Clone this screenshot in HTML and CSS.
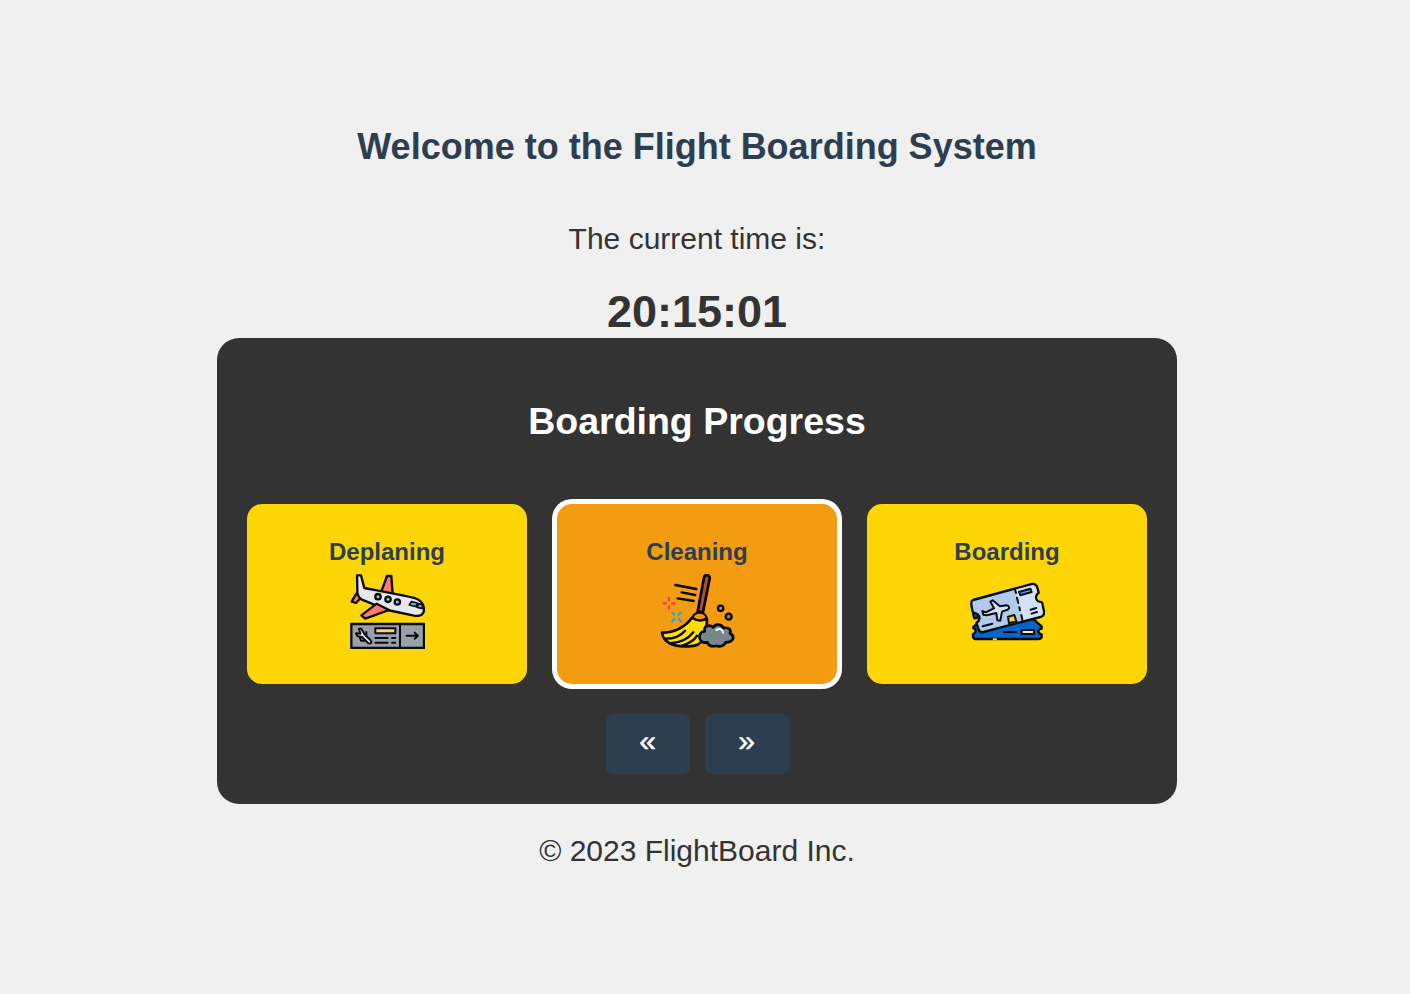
FILE: index.html
```html
<!DOCTYPE html>
<html lang="en">
<head>
<meta charset="utf-8">
<title>Flight Boarding System</title>
<link rel="stylesheet" href="styles.css">
</head>
<body>
<header class="header">
  <h1 class="title">Welcome to the Flight Boarding System</h1>
  <p class="time-label">The current time is:</p>
  <div class="clock">20:15:01</div>
</header>
<main class="board">
  <h2 class="board-title">Boarding Progress</h2>
  <div class="steps">
    <section class="step">
      <div class="step-name">Deplaning</div>
      <svg class="step-icon" viewBox="30 24 225 225" stroke="#0b0b0b" stroke-width="7" stroke-linecap="round" stroke-linejoin="round" fill="none">
        <path d="M125 74 141 30H154L158 84" fill="#fe7d68"/>
        <path d="M49 83 35 107 48 111 70 87Z" fill="#fe7d68"/>
        <path d="M51 28H63L73 66C120 75 185 87 224 96C242 102 252 116 252 131C252 147 240 152 222 149L142 132L64 100C55 94 51 87 52 72Z" fill="#e7e7ed"/>
        <path d="M110 113 64 148 76 158 147 132Z" fill="#fe7d68"/>
        <circle cx="114" cy="92" r="8" fill="#75d5ef"/><circle cx="144" cy="100" r="8" fill="#75d5ef"/><circle cx="172" cy="108" r="8" fill="#75d5ef"/>
        <path d="M214 107 232 111 229 122 208 117ZM235 113 246 116 250 128 232 124Z" fill="#56c7e9" stroke-width="5"/>
        <path d="M34 174H252V246H34Z" fill="#98a0ab" stroke-linejoin="miter"/>
        <path d="M180 173V246" stroke-width="6"/>
        <path d="M106 187H166V202H106Z" fill="#fed568" stroke-width="6"/>
        <path d="M106 216H143M156 216H166M106 230H143M156 230H166" stroke-width="6"/>
        <path d="M200 209H234M224 200 234 209 224 218" stroke-width="6"/>
        <path d="M57 188H64L73 204 91 222C98 231 91 235 84 231L66 213 53 211 48 202 61 203Z" fill="#e7e7ed" stroke-width="6"/>
        <path d="M79 198V210M59 213 63 224H73" stroke-width="6"/>
      </svg>
    </section>
    <section class="step step-active">
      <div class="step-name">Cleaning</div>
      <svg class="step-icon" viewBox="30 24 225 225" stroke="#060504" stroke-width="8" stroke-linecap="round" stroke-linejoin="round" fill="none">
        <path d="M162 35C163 24 181 25 179 38L159 139 143 136Z" fill="#a4532d"/>
        <path d="M76 57 139 69M95 79 136 87M83 97 131 105" stroke-width="7"/>
        <path d="M57 96V103M57 121V128M41 112H48M66 112H73" stroke="#fa3a58" stroke-width="7"/>
        <path d="M67 140 73 146M86 159 93 166M93 140 86 146M73 159 67 166" stroke="#2aa5f4" stroke-width="7"/>
        <path d="M128 153C107 181 75 200 36 200C40 230 72 243 110 241C139 242 151 235 159 219L170 180 171 160Z" fill="#ffe000"/>
        <path d="M48 218C74 218 93 208 105 194M66 231C98 229 118 214 130 199M96 239C119 232 132 225 141 209" stroke-width="7"/>
        <path d="M128 156C131 135 167 134 170 158C156 165 139 164 128 156Z" fill="#fb9608" stroke-width="7"/>
        <path d="M163 230C143 225 144 197 164 196C161 180 176 174 190 184C197 171 216 175 220 186C238 183 244 192 240 202C257 211 250 230 227 229C223 241 208 243 199 239C187 243 174 240 172 229Z" fill="#77858c"/>
        <path d="M199 192C210 186 218 190 219 200" stroke="#f5f5f5" stroke-width="6"/>
        <circle cx="212" cy="127" r="8" fill="#9aa7ad" stroke-width="7"/><circle cx="236" cy="152" r="9" fill="#77858c" stroke-width="7"/>
      </svg>
    </section>
    <section class="step">
      <div class="step-name">Boarding</div>
      <svg class="step-icon" viewBox="30 24 225 225" stroke="#070b12" stroke-width="7" stroke-linecap="round" stroke-linejoin="round" fill="none">
        <path d="M40 183 48 176 218 158 245 181V188C232 190 232 202 245 205V211C245 217 241 219 237 219H47C42 219 39 216 39 210V204C49 201 50 188 40 187Z" fill="#0566c9"/>
        <path d="M40 137C49 139 55 146 54 155L43 157C40 151 39 144 40 137Z" fill="#0566c9"/>
        <path d="M39 102 216 54C226 53 230 58 232 65L236 80C226 86 225 99 234 106L246 109 252 137C253 146 249 151 241 153L71 198C63 200 58 197 56 190L49 171C59 166 62 153 53 145C47 140 40 142 38 137L34 116C33 108 34 104 39 102Z" fill="#b2caeb"/>
        <path d="M166 71 217 58Q225 56 228 66L232 79C222 87 222 101 232 109L243 112 248 137Q249 147 239 149L187 162Z" fill="#d2e1f6" stroke="none"/>
        <path d="M165 70 168 81M171 95 175 111M178 124 180 133M184 147 187 162" stroke-width="6"/>
        <path d="M177 78 211 68 215 78 181 88Z" fill="#5ba1e9" stroke-width="6"/>
        <path d="M212 131 229 126M215 143 231 138M68 181 97 173" stroke-width="6"/>
        <path d="M144 152 163 147 169 166 147 172Z" fill="#ffd607" stroke-width="6"/>
        <path d="M67 135 77 139 102 127 91 107 98 103 120 121 139 118C148 119 150 126 143 131L126 137 121 164 112 163 109 141 80 148 70 146Z" fill="#d2e1f6" stroke-width="6"/>
        <path d="M185 192H222V204H185Z" fill="#f5e7ca" stroke-width="6"/>
        <path d="M132 198H169" stroke-width="6"/>
        <path d="M101 220H108" stroke="#ffd607" stroke-width="6"/>
      </svg>
    </section>
  </div>
  <nav class="controls">
    <button class="control" type="button">«</button>
    <button class="control" type="button">»</button>
  </nav>
</main>
<footer class="footer">© 2023 FlightBoard Inc.</footer>
</body>
</html>
```
FILE: styles.css
```css
* { box-sizing: border-box; }
body {
  width: 1394px;
  margin: 0;
  padding-top: 126px;
  display: flex;
  flex-direction: column;
  align-items: center;
  background: #f0f0f0;
  color: #333;
  font: 30px/40px "Liberation Sans", Arial, sans-serif;
}
.header { text-align: center; }
.title { margin: 0; color: #2c3e50; font-size: 36px; line-height: 42px; }
.time-label { margin: 50px 0 0; line-height: 42px; }
.clock { margin-top: 26px; font-size: 45px; font-weight: bold; line-height: 52px; }
.board {
  width: 960px;
  height: 466px;
  padding: 30px;
  border-radius: 22px;
  background: #333;
}
.board-title {
  margin: 32px 0 62px;
  color: #fff;
  font-size: 37.5px;
  line-height: 42px;
  text-align: center;
}
.steps { display: flex; gap: 30px; }
.step {
  width: 280px;
  height: 180px;
  padding-top: 34px;
  display: flex;
  flex-direction: column;
  align-items: center;
  border-radius: 15px;
  background: #ffd605;
  color: #2c3e50;
}
.step-active { background: #f39c12; box-shadow: 0 0 0 5px #fff; }
.step-name { font-size: 24px; font-weight: bold; line-height: 28px; }
.step-icon { width: 75px; height: 75px; margin: 8px 0 0 1px; }
.controls { display: flex; justify-content: center; gap: 15px; margin-top: 30px; }
.control {
  width: 84px;
  height: 60px;
  padding: 0 0 7px;
  border: 0;
  border-radius: 7px;
  background: #2c3e50;
  color: #fff;
  font: 30px "Liberation Sans", Arial, sans-serif;
  -webkit-text-stroke: 0.5px #fff;
}
.footer { margin-top: 27px; }
```
